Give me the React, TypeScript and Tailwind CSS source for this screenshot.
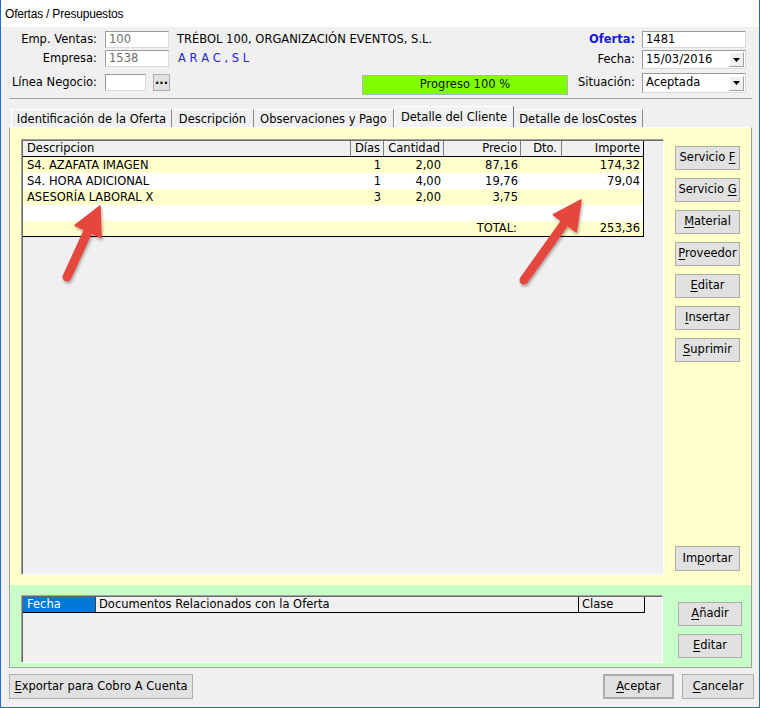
import React from "react";

type P = { children?: React.ReactNode; className?: string };

function Btn({ children, className = "" }: P) {
  return (
    <div
      className={
        "flex items-center justify-center bg-[#e1e1e1] border border-[#adadad] shrink-0 " +
        className
      }
    >
      {children}
    </div>
  );
}

function Field({ children, className = "" }: P) {
  return (
    <div
      className={
        "flex items-center bg-white border border-t-[#9a9a9a] border-l-[#9a9a9a] border-b-[#dadada] border-r-[#dadada] pl-[3px] shrink-0 " +
        className
      }
    >
      {children}
    </div>
  );
}

function Combo({ value, className = "" }: { value: string; className?: string }) {
  return (
    <Field className={"justify-between pr-[1px] " + className}>
      <span>{value}</span>
      <div className="w-[15px] h-[15px] bg-[#f0f0f0] border border-t-white border-l-white border-r-[#a0a0a0] border-b-[#a0a0a0] flex items-center justify-center">
        <svg width="7" height="4" viewBox="0 0 7 4">
          <path d="M0 0h7L3.5 4z" fill="#000" />
        </svg>
      </div>
    </Field>
  );
}

const U = ({ c }: { c: string }) => <span className="underline underline-offset-[2px]">{c}</span>;

const rows = [
  { d: "S4. AZAFATA IMAGEN", dias: "1", cant: "2,00", precio: "87,16", imp: "174,32", bg: "bg-[#ffffcc]" },
  { d: "S4. HORA ADICIONAL", dias: "1", cant: "4,00", precio: "19,76", imp: "79,04", bg: "bg-white" },
  { d: "ASESORÍA LABORAL X", dias: "3", cant: "2,00", precio: "3,75", imp: "", bg: "bg-[#ffffcc]" },
  { d: "", dias: "", cant: "", precio: "", imp: "", bg: "bg-white" },
];

function Arrows() {
  return (
    <svg className="absolute left-0 top-0 pointer-events-none" width="760" height="708" viewBox="0 0 760 708">
      <defs>
        <filter id="sh" x="-20%" y="-20%" width="140%" height="140%">
          <feDropShadow dx="1" dy="2" stdDeviation="1.5" floodColor="#000" floodOpacity="0.35" />
        </filter>
      </defs>
      <g filter="url(#sh)" fill="#e6463e" stroke="#e6463e">
        <line x1="66" y1="277" x2="88" y2="229" strokeWidth="9" strokeLinecap="round" />
        <polygon points="99,206 100,237.5 74,225.3" strokeWidth="1.5" strokeLinejoin="round" />
        <line x1="523" y1="280" x2="565" y2="221" strokeWidth="9" strokeLinecap="round" />
        <polygon points="580,200 575.3,232 552.3,214.7" strokeWidth="1.5" strokeLinejoin="round" />
      </g>
    </svg>
  );
}

export default function App() {
  return (
    <div className="relative w-[760px] h-[708px] overflow-hidden bg-[#f0f0f0] border-x border-b border-[#1e6fc6] font-['DejaVu_Sans',sans-serif] text-[11.5px] text-black flex flex-col">
      {/* title bar */}
      <div className="h-[27px] shrink-0 bg-white flex items-center pl-[4px] font-['Liberation_Sans',sans-serif] text-[12px] tracking-[-0.2px]">
        Ofertas / Presupuestos
      </div>

      {/* header */}
      <div className="flex flex-col shrink-0">
        <div className="mt-[4px] h-[17px] flex items-center">
          <div className="w-[96px] text-right">Emp. Ventas:</div>
          <Field className="ml-[8px] w-[64px] h-[17px] text-[#6d6d6d]">100</Field>
          <div className="ml-[8px]">TRÉBOL 100, ORGANIZACIÓN EVENTOS, S.L.</div>
          <div className="ml-auto mr-[7px] font-bold text-[#1717e6]">Oferta:</div>
          <Field className="w-[104px] h-[17px] mr-[13px]">1481</Field>
        </div>
        <div className="mt-[2px] h-[19px] flex items-start">
          <div className="w-[96px] h-[17px] flex items-center justify-end">Empresa:</div>
          <Field className="ml-[8px] w-[64px] h-[17px] text-[#6d6d6d]">1538</Field>
          <div className="ml-[9px] h-[17px] flex items-center text-[#2323e6]">A R A C , S L</div>
          <div className="ml-auto mr-[7px] h-[19px] flex items-center">Fecha:</div>
          <Combo value="15/03/2016" className="w-[104px] h-[19px] mr-[13px]" />
        </div>
        <div className="mt-[4px] h-[21px] flex items-start">
          <div className="w-[96px] h-[19px] flex items-center justify-end">Línea Negocio:</div>
          <Field className="ml-[8px] mt-[1px] w-[41px] h-[17px]" />
          <Btn className="ml-[7px] mt-[1px] w-[17px] h-[17px] font-bold leading-none pb-[3px]">...</Btn>
          <div className="ml-[192px] mt-[2px] w-[206px] h-[20px] bg-[#80ff00] border border-[#b4b4b4] flex items-center justify-center text-[#111]">
            Progreso 100 %
          </div>
          <div className="ml-auto mr-[7px] h-[20px] flex items-center">Situación:</div>
          <Combo value="Aceptada" className="w-[104px] h-[20px] mr-[13px]" />
        </div>
        <div className="mt-[4px] ml-[8px] mr-[7px] h-px bg-[#a0a0a0]" />
      </div>

      {/* tabs */}
      <div className="mt-[7px] ml-[10px] h-[21px] flex items-end shrink-0">
        <div className="w-[161px] h-[18px] pt-[2px] flex items-center justify-center border-t border-l border-t-white border-l-white border-r border-r-[#8a8a8a]">
          Identificación de la Oferta
        </div>
        <div className="w-[82px] h-[18px] pt-[2px] flex items-center justify-center border-t border-t-white border-r border-r-[#8a8a8a]">
          Descripción
        </div>
        <div className="w-[140px] h-[18px] pt-[2px] flex items-center justify-center border-t border-t-white border-r border-r-[#8a8a8a]">
          Observaciones y Pago
        </div>
        <div className="w-[120px] h-[21px] pt-[1px] flex items-center justify-center bg-[#f3f3f3] border-t border-l border-t-white border-l-white border-r border-r-[#6e6e6e]">
          Detalle del Cliente
        </div>
        <div className="w-[129px] h-[18px] pt-[2px] flex items-center justify-center border-t border-t-white border-r border-r-[#8a8a8a]">
          Detalle de losCostes
        </div>
      </div>

      {/* panel */}
      <div className="ml-[8px] mr-[7px] border-x border-b border-[#a0a0a0] border-t border-t-white flex flex-col shrink-0">
        <div className="h-[457px] bg-[#ffffcc] flex">
          <div className="ml-[11px] mt-[11px] w-[643px] h-[436px] bg-[#f0f0f0] border border-t-[#a0a0a0] border-l-[#a0a0a0] border-b-white border-r-white shadow-[inset_1px_1px_0_#696969] p-[1px]">
            <div className="w-[621px] border-r border-b border-black">
              <div className="flex h-[16px] border-b border-black">
                <div className="w-[328px] pl-[4px] flex items-center border-r border-r-[#808080]">Descripcion</div>
                <div className="w-[33px] pr-[3px] flex items-center justify-end border-r border-r-[#808080]">Días</div>
                <div className="w-[60px] pr-[3px] flex items-center justify-end border-r border-r-[#808080]">Cantidad</div>
                <div className="w-[77px] pr-[3px] flex items-center justify-end border-r border-r-[#808080]">Precio</div>
                <div className="w-[41px] pr-[4px] flex items-center justify-end border-r border-r-[#808080]">Dto.</div>
                <div className="w-[81px] pr-[3px] flex items-center justify-end">Importe</div>
              </div>
              {rows.map((r, i) => (
                <div key={i} className={"flex h-[16px] pt-[1px] " + r.bg}>
                  <div className="w-[328px] pl-[4px] flex items-center">{r.d}</div>
                  <div className="w-[33px] pr-[3px] flex items-center justify-end">{r.dias}</div>
                  <div className="w-[60px] pr-[3px] flex items-center justify-end">{r.cant}</div>
                  <div className="w-[77px] pr-[3px] flex items-center justify-end">{r.precio}</div>
                  <div className="w-[41px]" />
                  <div className="w-[81px] pr-[3px] flex items-center justify-end">{r.imp}</div>
                </div>
              ))}
              <div className="flex h-[15px] bg-[#ffffcc]">
                <div className="w-[328px]" />
                <div className="w-[33px]" />
                <div className="w-[60px]" />
                <div className="w-[77px] pr-[4px] flex items-center justify-end">TOTAL:</div>
                <div className="w-[41px]" />
                <div className="w-[81px] pr-[3px] flex items-center justify-end">253,36</div>
              </div>
            </div>
          </div>
          <div className="ml-[11px] pt-[18px] flex flex-col gap-[8px]">
            <Btn className="w-[65px] h-[24px]">
              <span>Servicio <U c="F" /></span>
            </Btn>
            <Btn className="w-[65px] h-[24px]">
              <span>Servicio <U c="G" /></span>
            </Btn>
            <Btn className="w-[65px] h-[24px]">
              <span><U c="M" />aterial</span>
            </Btn>
            <Btn className="w-[65px] h-[24px]">
              <span><U c="P" />roveedor</span>
            </Btn>
            <Btn className="w-[65px] h-[24px]">
              <span><U c="E" />ditar</span>
            </Btn>
            <Btn className="w-[65px] h-[24px]">
              <span><U c="I" />nsertar</span>
            </Btn>
            <Btn className="w-[65px] h-[24px]">
              <span><U c="S" />uprimir</span>
            </Btn>
            <Btn className="mt-auto mb-[14px] w-[65px] h-[25px]">
              <span>Im<U c="p" />ortar</span>
            </Btn>
          </div>
        </div>
        <div className="h-[82px] bg-[#c8fec8] flex">
          <div className="ml-[11px] mt-[10px] w-[642px] h-[68px] bg-[#f0f0f0] border border-t-[#a0a0a0] border-l-[#a0a0a0] border-b-white border-r-white shadow-[inset_1px_1px_0_#696969] p-[1px]">
            <div className="flex w-[622px] h-[16px] border-b border-black">
              <div className="w-[72px] pl-[4px] flex items-center bg-[#0078d7] text-white">Fecha</div>
              <div className="w-[483px] pl-[3px] flex items-center border-l border-l-[#404040]">
                Documentos Relacionados con la Oferta
              </div>
              <div className="w-[67px] pl-[3px] flex items-center border-x border-black">Clase</div>
            </div>
          </div>
          <div className="ml-[15px] pt-[17px] flex flex-col gap-[8px]">
            <Btn className="w-[64px] h-[24px]">
              <span><U c="A" />ñadir</span>
            </Btn>
            <Btn className="w-[64px] h-[24px]">
              <span><U c="E" />ditar</span>
            </Btn>
          </div>
        </div>
      </div>

      {/* bottom bar */}
      <div className="flex items-start pt-[6px]">
        <Btn className="ml-[8px] w-[184px] h-[25px]">
          <span><U c="E" />xportar para Cobro A Cuenta</span>
        </Btn>
        <Btn className="ml-auto w-[71px] h-[25px] border-[#3c3c3c] shadow-[inset_0_0_0_1px_#adadad]">
          <span><U c="A" />ceptar</span>
        </Btn>
        <Btn className="ml-[8px] mr-[5px] w-[72px] h-[25px]">
          <span><U c="C" />ancelar</span>
        </Btn>
      </div>

      <Arrows />
    </div>
  );
}
